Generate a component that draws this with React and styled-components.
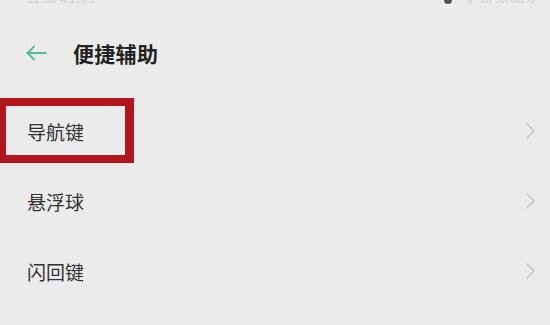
import styled, { createGlobalStyle } from 'styled-components'

const GlobalStyle = createGlobalStyle`
  html, body {
    margin: 0;
    padding: 0;
    background: #ebebeb;
  }
  body {
    font-family: "Noto Sans CJK SC", "Noto Sans", sans-serif;
    overflow: hidden;
  }
`

const items = ['导航键', '悬浮球', '闪回键']

const App = () => {
  return (
    <Screen>
      <GlobalStyle />
      <StatusBar>
        <StatusText>12:08 4.2K/s</StatusText>
        <StatusRight>
          <StatusDot />
          <StatusText>令 .ıll .ıll 88%</StatusText>
        </StatusRight>
      </StatusBar>
      <Header>
        <BackArrow width="22" height="16" viewBox="0 0 22 16">
          <path d="M21 8H2M9 1.5L2.5 8L9 14.5" fill="none" stroke="#4fbf90" strokeWidth="1.8" strokeLinecap="round" strokeLinejoin="round" />
        </BackArrow>
        <Title>便捷辅助</Title>
      </Header>
      <List>
        {items.map((label, i) => (
          <Row key={label}>
            {i === 0 && <Highlight />}
            <Label>{label}</Label>
            <Chevron width="9" height="16" viewBox="0 0 9 16">
              <path d="M1 1L8 8L1 15" fill="none" stroke="#c2c2c2" strokeWidth="1.4" strokeLinecap="round" strokeLinejoin="round" />
            </Chevron>
          </Row>
        ))}
      </List>
    </Screen>
  )
}

export default App

const Screen = styled.div`
  width: 550px;
  height: 325px;
  display: flex;
  flex-direction: column;
  background: #ebebeb;
  overflow: hidden;
`

const StatusBar = styled.div`
  height: 4px;
  padding: 0 15px 0 27px;
  display: flex;
  align-items: flex-end;
  justify-content: space-between;
  overflow: hidden;
`

const StatusText = styled.span`
  font-size: 12px;
  line-height: 12px;
  color: #d0d0d0;
  white-space: nowrap;
`

const StatusRight = styled.div`
  display: flex;
  align-items: flex-end;
  gap: 12px;
`

const StatusDot = styled.span`
  width: 8px;
  height: 8px;
  border-radius: 50%;
  background: #555;
`

const Header = styled.div`
  height: 92px;
  padding: 5px 0 0 25px;
  display: flex;
  align-items: center;
  box-sizing: border-box;
`

const BackArrow = styled.svg`
  flex-shrink: 0;
  margin-right: 26px;
`

const Title = styled.h1`
  margin: 0;
  font-size: 21px;
  font-weight: 700;
  color: #222;
  letter-spacing: 0.3px;
`

const List = styled.div`
  display: flex;
  flex-direction: column;
`

const Row = styled.div`
  position: relative;
  height: 70px;
  padding: 0 15px 0 27px;
  display: flex;
  align-items: center;
  justify-content: space-between;
`

const Label = styled.span`
  font-size: 19px;
  color: #333;
`

const Chevron = styled.svg`
  flex-shrink: 0;
`

const Highlight = styled.div`
  position: absolute;
  top: 2px;
  left: -2px;
  width: 136px;
  height: 65px;
  box-sizing: border-box;
  border: 8px solid #b3151d;
  border-right-width: 9px;
  pointer-events: none;
`
